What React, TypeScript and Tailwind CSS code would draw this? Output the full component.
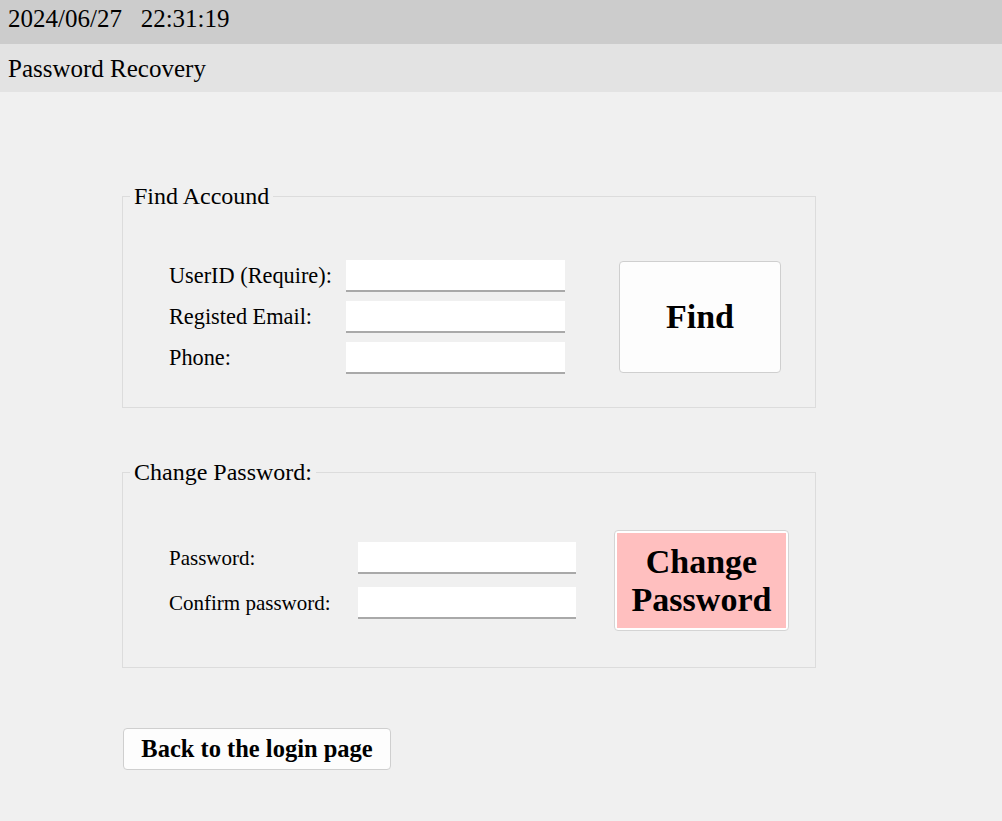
import React from 'react';

const serif = { fontFamily: '"Liberation Serif", "Times New Roman", serif' };

function Row({ label, labelW, inputW, size }: { label: string; labelW: string; inputW: string; size: string }) {
  return (
    <div className="flex items-center">
      <label className={`${labelW} ${size} leading-[26px] text-black`}>{label}</label>
      <input
        type="text"
        className={`${inputW} h-[32px] bg-white border-b-2 border-[#a9a9a9] outline-none px-1`}
      />
    </div>
  );
}

export default function App() {
  return (
    <div className="min-h-screen bg-[#f0f0f0] text-black" style={serif}>
      <div className="h-[44px] bg-[#cccccc] pl-2 pt-[5px] text-[25px] leading-[27px] whitespace-pre">
        2024/06/27   22:31:19
      </div>
      <div className="h-[48px] bg-[#e3e3e3] pl-2 pt-[11px] text-[25px] leading-[27px]">
        Password Recovery
      </div>

      <div className="pl-[122px] pt-[90px] pb-10">
        {/* Find account */}
        <fieldset className="w-[694px] border border-[#dcdcdc]">
          <legend className="ml-[7px] px-[4px] text-[24px] leading-[28px]">Find Accound</legend>
          <div className="flex items-center pl-[46px] pt-[50px] pb-[33px]">
            <div className="flex flex-col gap-[9px]">
              <Row label="UserID (Require):" labelW="w-[177px]" inputW="w-[219px]" size="text-[22.3px]" />
              <Row label="Registed Email:" labelW="w-[177px]" inputW="w-[219px]" size="text-[22.3px]" />
              <Row label="Phone:" labelW="w-[177px]" inputW="w-[219px]" size="text-[22.3px]" />
            </div>
            <button className="ml-[54px] w-[162px] h-[112px] bg-[#fdfdfd] border border-[#cfcfcf] rounded-[4px] text-[34px] font-bold leading-[38px]">
              Find
            </button>
          </div>
        </fieldset>

        {/* Change password */}
        <fieldset className="mt-[50px] w-[694px] border border-[#dcdcdc]">
          <legend className="ml-[7px] px-[4px] text-[24px] leading-[28px]">Change Password:</legend>
          <div className="flex items-center pl-[46px] pt-[44px] pb-[36px]">
            <div className="flex flex-col gap-[13px]">
              <Row label="Password:" labelW="w-[189px]" inputW="w-[218px]" size="text-[21px]" />
              <Row label="Confirm password:" labelW="w-[189px]" inputW="w-[218px]" size="text-[21px]" />
            </div>
            <button className="ml-[38px] w-[175px] h-[101px] bg-white border border-[#d4d4d4] rounded-[4px] p-[2px]">
              <div className="w-full h-full bg-[#ffbfbf] flex items-center justify-center text-[34px] font-bold leading-[38px]">
                Change
                <br />
                Password
              </div>
            </button>
          </div>
        </fieldset>

        <button className="mt-[60px] ml-[1px] w-[268px] h-[42px] bg-[#fdfdfd] border border-[#cfcfcf] rounded-[4px] text-[24.5px] font-bold leading-[26px]">
          Back to the login page
        </button>
      </div>
    </div>
  );
}
